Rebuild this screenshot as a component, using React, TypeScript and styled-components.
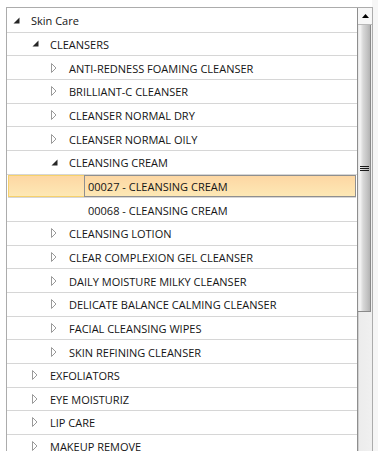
import React from "react";
import styled, { createGlobalStyle } from "styled-components";

const Global = createGlobalStyle`
  html, body { margin: 0; padding: 0; background: #ffffff; overflow: hidden; }
  body { font-family: "Open Sans", "Noto Sans", sans-serif; }
`;

const Page = styled.div`
  display: flex;
  align-items: flex-start;
  height: 451px;
  background: linear-gradient(to right, #ffffff 372px, #f6f6f6 372px);
`;

const Frame = styled.div`
  margin: 7px 0 0 6px;
  width: 367px;
  height: 470px;
  box-sizing: border-box;
  border: 1px solid #acacac;
  background: #ffffff;
  display: flex;
  overflow: hidden;
`;

const TreeArea = styled.div`
  flex: 1;
  min-width: 0;
  padding-top: 1px;
  display: flex;
  flex-direction: column;
`;

const Row = styled.div<{ $level: number }>`
  height: 23.67px;
  box-sizing: border-box;
  border-bottom: 1px solid #d6d6d6;
  display: flex;
  align-items: stretch;
  padding-left: ${(p) => p.$level * 19 + 1}px;
  flex-shrink: 0;
`;

const SelectedRow = styled(Row)`
  background: linear-gradient(to bottom, #fdd6a2, #fde9b6);
  box-shadow: inset 0 0 0 1px #f6d16c;
  margin: 0 1px 0 1px;
  padding-left: ${(p) => p.$level * 19}px;
`;

const Expander = styled.div`
  width: 16px;
  flex-shrink: 0;
  display: flex;
  align-items: center;
  justify-content: center;
`;

const Label = styled.div<{ $focused?: boolean }>`
  margin-left: 3px;
  padding: 1px 3px 0 3px;
  border: 1px solid ${(p) => (p.$focused ? "#8f8f8f" : "transparent")};
  display: flex;
  align-items: center;
  font-size: 11px;
  color: #151515;
  white-space: nowrap;
  flex: ${(p) => (p.$focused ? 1 : "0 0 auto")};
  box-sizing: border-box;
`;

const ScrollBar = styled.div`
  width: 15px;
  flex-shrink: 0;
  box-sizing: border-box;
  border-left: 1px solid #8e8e8e;
  display: flex;
  flex-direction: column;
  background: linear-gradient(to right, #cfcfcf 0, #cfcfcf 1px, #ececec 1px, #f0f0f0 100%);
`;

const UpButton = styled.div`
  height: 17px;
  box-sizing: border-box;
  border-bottom: 1px solid #b9b9b9;
  background: #f7f7f7;
  display: flex;
  align-items: center;
  justify-content: center;
`;

const Thumb = styled.div`
  height: 287px;
  box-sizing: border-box;
  margin-right: 1px;
  border-right: 1px solid #8a8a8a;
  border-bottom: 1px solid #8a8a8a;
  background: linear-gradient(to right, #e4e4e4 0, #f6f6f6 2px, #d8d8d8 5px, #c4c4c4 9px, #b3b3b3 12px);
  display: flex;
  flex-direction: column;
  align-items: center;
  justify-content: center;
  gap: 1px;
`;

const Grip = styled.div`
  width: 9px;
  height: 1px;
  background: #1a1a1a;
`;

const Collapsed = () => (
  <svg width="6" height="10" viewBox="0 0 6 10">
    <polygon points="0.5,0.5 5,5 0.5,9.5" fill="#ffffff" stroke="#9a9a9a" strokeWidth="1" />
  </svg>
);

const Expanded = () => (
  <svg width="7" height="7" viewBox="0 0 7 7">
    <polygon points="6.5,0.5 6.5,6.5 0.5,6.5" fill="#262626" />
  </svg>
);

type Item = { text: string; level: number; state: "open" | "closed" | "leaf"; selected?: boolean };

const items: Item[] = [
  { text: "Skin Care", level: 0, state: "open" },
  { text: "CLEANSERS", level: 1, state: "open" },
  { text: "ANTI-REDNESS FOAMING CLEANSER", level: 2, state: "closed" },
  { text: "BRILLIANT-C CLEANSER", level: 2, state: "closed" },
  { text: "CLEANSER NORMAL DRY", level: 2, state: "closed" },
  { text: "CLEANSER NORMAL OILY", level: 2, state: "closed" },
  { text: "CLEANSING CREAM", level: 2, state: "open" },
  { text: "00027 - CLEANSING CREAM", level: 3, state: "leaf", selected: true },
  { text: "00068 - CLEANSING CREAM", level: 3, state: "leaf" },
  { text: "CLEANSING LOTION", level: 2, state: "closed" },
  { text: "CLEAR COMPLEXION GEL CLEANSER", level: 2, state: "closed" },
  { text: "DAILY MOISTURE MILKY CLEANSER", level: 2, state: "closed" },
  { text: "DELICATE BALANCE CALMING CLEANSER", level: 2, state: "closed" },
  { text: "FACIAL CLEANSING WIPES", level: 2, state: "closed" },
  { text: "SKIN REFINING CLEANSER", level: 2, state: "closed" },
  { text: "EXFOLIATORS", level: 1, state: "closed" },
  { text: "EYE MOISTURIZ", level: 1, state: "closed" },
  { text: "LIP CARE", level: 1, state: "closed" },
  { text: "MAKEUP REMOVE", level: 1, state: "closed" },
];

export default function App() {
  return (
    <>
      <Global />
      <Page>
        <Frame>
          <TreeArea>
            {items.map((it, i) => {
              const content = (
                <>
                  <Expander>
                    {it.state === "open" ? <Expanded /> : it.state === "closed" ? <Collapsed /> : null}
                  </Expander>
                  <Label $focused={it.selected}>{it.text}</Label>
                </>
              );
              return it.selected ? (
                <SelectedRow key={i} $level={it.level}>
                  {content}
                </SelectedRow>
              ) : (
                <Row key={i} $level={it.level}>
                  {content}
                </Row>
              );
            })}
          </TreeArea>
          <ScrollBar>
            <UpButton>
              <svg width="7" height="4" viewBox="0 0 7 4">
                <polygon points="3.5,0 7,4 0,4" fill="#000000" />
              </svg>
            </UpButton>
            <Thumb>
              <Grip />
              <Grip />
              <Grip />
            </Thumb>
          </ScrollBar>
        </Frame>
      </Page>
    </>
  );
}
